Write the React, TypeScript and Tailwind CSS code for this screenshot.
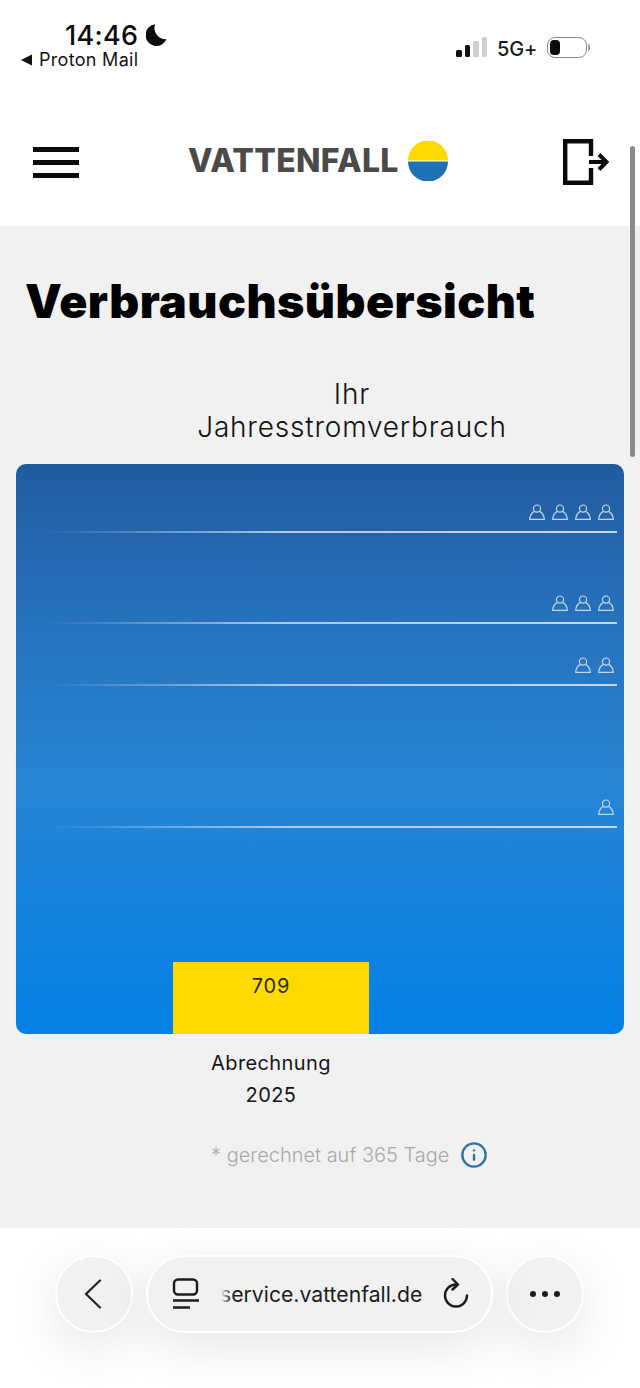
import { Info } from "lucide-react";

const sans = "font-['Inter','Liberation_Sans',sans-serif]";

function Person() {
    return (
        <svg width="16" height="16" viewBox="0 0 16 16" fill="none" stroke="currentColor" strokeWidth="1.2">
            <circle cx="8" cy="4.6" r="3.6" />
            <path d="M5.4 7.4C3.2 8.6 1 11.4.6 15.3h14.8c-.4-3.9-2.6-6.7-4.8-7.9" strokeLinejoin="round" />
        </svg>
    );
}

function ChartLine({ height, people }: { height: string; people: number }) {
    return (
        <div className={`${height} flex flex-col justify-end shrink-0`}>
            <div className="flex justify-end gap-[7px] pr-[10px] pb-[11px] text-[#c3d6ea]">
                {Array.from({ length: people }).map((_, i) => (
                    <Person key={i} />
                ))}
            </div>
            <div className="h-[2px] mr-[7px] bg-gradient-to-r from-transparent from-5% via-[#b0c8e2] via-45% to-[#c4d9ef]" />
        </div>
    );
}

function StatusBar() {
    return (
        <div className={`h-[74px] relative ${sans}`}>
            <div className="absolute left-[65px] top-[21px] flex items-center gap-[8px]">
                <span className="text-[27px] leading-[29px] font-medium text-[#0c0c0c] tracking-[0.3px]">14:46</span>
                <svg width="23" height="23" viewBox="0 0 24 24" fill="#0c0c0c" className="-mt-[2px]">
                    <path d="M21.5 16.8A11.5 11.5 0 0 1 9.6 1.2a11.4 11.4 0 1 0 11.9 15.6z" />
                </svg>
            </div>
            <div className="absolute left-[20px] top-[50px] flex items-center gap-[7px]">
                <svg width="12" height="12" viewBox="0 0 12 12" fill="#111"><path d="M12 .5v11L1 6z" /></svg>
                <span className="text-[18px] leading-[20px] text-[#151515] tracking-[0.3px]">Proton Mail</span>
            </div>
            <div className="absolute left-[456px] top-[37px] h-[23px] flex items-center">
                <div className="flex items-end gap-[3px] h-[20px] self-start w-[32px]">
                    <div className="w-[5.5px] h-[7px] rounded-[1.5px] bg-[#111]" />
                    <div className="w-[5.5px] h-[12px] rounded-[1.5px] bg-[#111]" />
                    <div className="w-[5.5px] h-[16px] rounded-[1.5px] bg-[#cfcfcf]" />
                    <div className="w-[5.5px] h-[20px] rounded-[1.5px] bg-[#cfcfcf]" />
                </div>
                <span className="ml-[9px] text-[20px] leading-[24px] font-medium text-[#1a1a1a] tracking-[-0.2px]">5G+</span>
                <div className="ml-[10px] flex items-center gap-[1px] self-start">
                    <div className="w-[40px] h-[21px] rounded-[8px] border-[1.5px] border-[#8a8a8a] p-[2px]">
                        <div className="w-[10px] h-full rounded-[4px] bg-[#0c0c0c]" />
                    </div>
                    <div className="w-[2px] h-[7px] rounded-r-full bg-[#a0a0a0]" />
                </div>
            </div>
        </div>
    );
}

function Header() {
    return (
        <header className="h-[226px] bg-white shrink-0">
            <StatusBar />
            <div className="h-[152px] flex items-start pt-[65px] pl-[33px] pr-[31px] justify-between">
                <div className="flex flex-col gap-[8px] pt-[8px]">
                    <div className="w-[46px] h-[5px] bg-[#0b0b0b]" />
                    <div className="w-[46px] h-[5px] bg-[#0b0b0b]" />
                    <div className="w-[46px] h-[5px] bg-[#0b0b0b]" />
                </div>
                <div className="flex items-center gap-[11px] mt-[2px] mr-[6px]">
                    <span className={`${sans} w-[209px] whitespace-nowrap text-[32px] leading-[40px] font-extrabold text-[#4b4a48] tracking-[0.3px]`}>VATTENFALL</span>
                    <svg width="40" height="40" viewBox="0 0 40 40">
                        <path d="M0 19.4a20 20 0 0 1 40 0z" fill="#ffda00" />
                        <path d="M0 20.6a20 20 0 0 0 40 0z" fill="#2071b5" />
                    </svg>
                </div>
                <svg width="46" height="46" viewBox="0 0 46 46" fill="none" stroke="#0b0b0b">
                    <path d="M28 17V2.2H2.2v41.6H28V29" strokeWidth="4.4" />
                    <path d="M26 23h17" strokeWidth="4" />
                    <path d="M36 15.5l7.5 7.5-7.5 7.5" strokeWidth="4" />
                </svg>
            </div>
        </header>
    );
}

function Chart() {
    return (
        <div className="mx-4 h-[570px] rounded-[10px] overflow-hidden flex flex-col bg-[linear-gradient(180deg,#205b9e_0%,#2670ba_25%,#2885d4_55%,#0481e6_100%)]">
            <ChartLine height="h-[69px]" people={4} />
            <ChartLine height="h-[91px]" people={3} />
            <ChartLine height="h-[62px]" people={2} />
            <ChartLine height="h-[142px]" people={1} />
            <div className="mt-auto ml-[157px] w-[196px] h-[72px] bg-[#ffda00] flex justify-center pt-[12px]">
                <span className={`text-[20px] leading-[24px] tracking-[0.8px] text-[#2c2c22] ${sans}`}>709</span>
            </div>
        </div>
    );
}

function Main() {
    return (
        <main className={`h-[1002px] bg-[#f1f1f1] ${sans}`}>
            <h1 className="pl-[25px] pt-[47px] text-[46.5px] leading-[56px] font-black text-black tracking-[0.45px]">Verbrauchsübersicht</h1>
            <div className="mt-[49px] ml-[64px] text-center text-[28px] leading-[33px] font-light text-[#111] tracking-[0.8px]">
                <div>Ihr</div>
                <div>Jahresstromverbrauch</div>
            </div>
            <div className="mt-[20px]">
                <Chart />
            </div>
            <div className="pl-[173px] w-[369px] mt-[13px] text-center text-[20px] leading-[32px] text-[#161616] tracking-[0.4px]">
                <div>Abrechnung</div>
                <div>2025</div>
            </div>
            <div className="mt-[30px] pl-[211px] flex items-center gap-[11px]">
                <span className="text-[20px] leading-[28px] font-light text-[#a9a9a9]">* gerechnet auf 365 Tage</span>
                <Info size={28} strokeWidth={2} className="text-[#2f70ae]" />
            </div>
        </main>
    );
}

function BrowserBar() {
    return (
        <div className={`h-[160px] bg-white pt-[27px] pl-[55px] flex gap-[13px] ${sans}`}>
            <div className="w-[78px] h-[78px] rounded-full bg-[#f1f1f1] border-2 border-white shadow-[0_14px_50px_rgba(0,0,0,0.1)] flex items-center justify-center">
                <svg width="18" height="30" viewBox="0 0 18 30" fill="none" stroke="#222" strokeWidth="2.2" strokeLinecap="round" strokeLinejoin="round" className="-ml-[3px]">
                    <path d="M16 1.5 2 15l14 13.5" />
                </svg>
            </div>
            <div className="w-[347px] h-[78px] rounded-full bg-[#f1f1f1] border-2 border-white shadow-[0_14px_50px_rgba(0,0,0,0.1)] flex items-center pl-[24px] pr-[22px] relative">
                <svg width="28" height="32" viewBox="0 0 28 32" fill="none" stroke="#1c1c1c" strokeWidth="2.4">
                    <rect x="2" y="1.5" width="23" height="15" rx="4" />
                    <path d="M1 22.5h26M1 29.5h17" />
                </svg>
                <span className="ml-[20px] text-[21.2px] leading-[26px] text-[#1c1c1c] whitespace-nowrap">service.vattenfall.de</span>
                <div className="absolute left-[73px] top-[20px] w-[10px] h-[34px] bg-gradient-to-r from-[#f1f1f1] to-transparent" />
                <svg width="26" height="32" viewBox="0 0 26 32" fill="none" stroke="#1c1c1c" strokeWidth="2.4" strokeLinecap="round" strokeLinejoin="round" className="ml-auto">
                    <path d="M13 6.5A11 11 0 1 0 24 17.5" />
                    <path d="M9.5 1l5.5 5.5-5.5 5" />
                </svg>
            </div>
            <div className="w-[78px] h-[78px] rounded-full bg-[#f1f1f1] border-2 border-white shadow-[0_14px_50px_rgba(0,0,0,0.1)] flex items-center justify-center gap-[6px]">
                <div className="w-[6px] h-[6px] rounded-full bg-[#1c1c1c]" />
                <div className="w-[6px] h-[6px] rounded-full bg-[#1c1c1c]" />
                <div className="w-[6px] h-[6px] rounded-full bg-[#1c1c1c]" />
            </div>
        </div>
    );
}

export default function App() {
    return (
        <div className="w-[640px] h-[1388px] overflow-hidden relative flex flex-col">
            <Header />
            <Main />
            <BrowserBar />
            <div className="absolute left-[630px] top-[146px] w-[5px] h-[311px] rounded-full bg-[#8a8a8a]" />
        </div>
    );
}
